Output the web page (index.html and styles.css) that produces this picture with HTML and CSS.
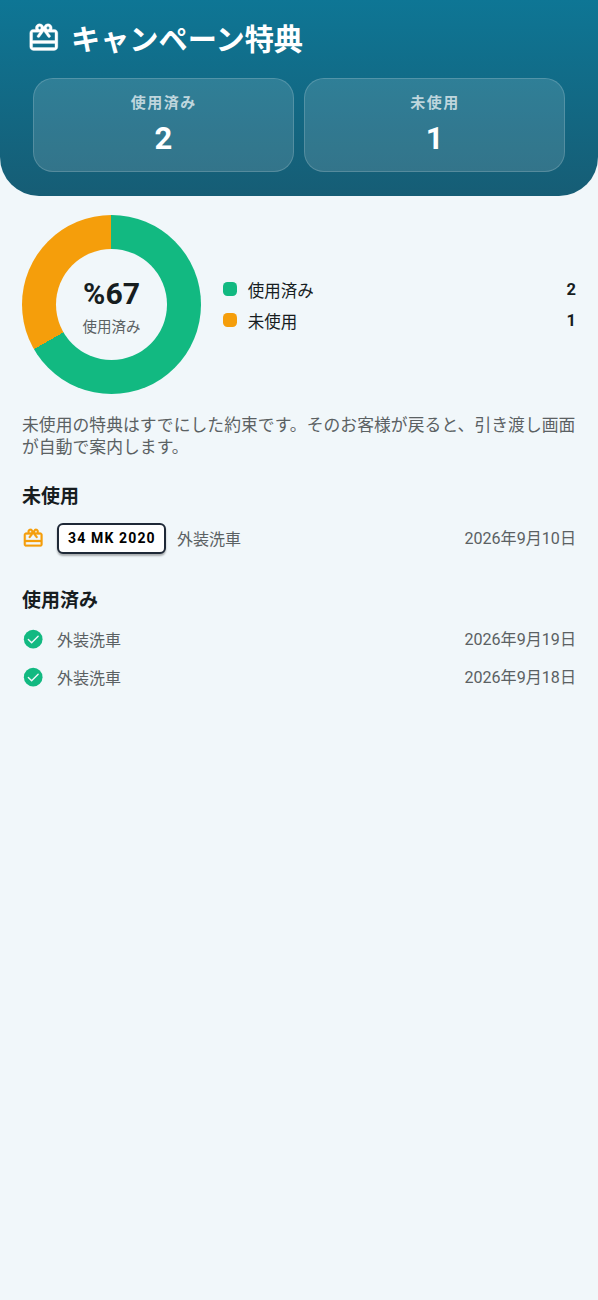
FILE: index.html
```html
<!DOCTYPE html>
<html lang="ja">
<head>
<meta charset="utf-8">
<title>キャンペーン特典</title>
<link rel="stylesheet" href="styles.css">
</head>
<body>
<svg class="defs" width="0" height="0" aria-hidden="true">
  <symbol id="gift" viewBox="0 0 24 24"><path d="M19.4 6h-1.58c.11-.31.18-.65.18-1 0-1.66-1.34-3-3-3-1.05 0-1.96.54-2.5 1.35l-.5.67-.5-.68C10.96 2.54 10.05 2 9 2 7.34 2 6 3.34 6 5c0 .35.07.69.18 1H4.6C3.1 6 2 7.1 2 8.6v9.8C2 19.9 3.1 21 4.6 21h14.8c1.5 0 2.6-1.1 2.6-2.6V8.6C22 7.1 20.9 6 19.4 6zM15 4c.55 0 1 .45 1 1s-.45 1-1 1-1-.45-1-1 .45-1 1-1zM9 4c.55 0 1 .45 1 1s-.45 1-1 1-1-.45-1-1 .45-1 1-1zm11 15H4v-3h16v3zm0-5H4V8h5.08L7.4 10.28c-.33.45-.23 1.07.22 1.4.44.32 1.07.22 1.39-.22L12 7.4l2.99 4.06c.32.44.95.54 1.39.22.45-.33.55-.95.22-1.4L14.92 8H20v6z"/></symbol>
  <symbol id="check" viewBox="0 0 24 24"><circle cx="12" cy="12" r="10"/><path d="M6.8 12.4l3.5 3.5 7-7" fill="none" stroke="#f1f7fa" stroke-width="1.5" stroke-linecap="round" stroke-linejoin="round"/></symbol>
</svg>
<header class="header">
  <h1 class="title"><svg class="title-icon"><use href="#gift"/></svg><span class="title-text">キャンペーン特典</span></h1>
  <div class="stats">
    <div class="stat"><span class="stat-label">使用済み</span><span class="stat-value">2</span></div>
    <div class="stat"><span class="stat-label">未使用</span><span class="stat-value">1</span></div>
  </div>
</header>
<main class="content">
  <section class="summary">
    <div class="donut">
      <div class="donut-hole"><span class="percent">%67</span><span class="percent-label">使用済み</span></div>
    </div>
    <div class="legend">
      <div class="legend-row"><i class="swatch used"></i><span class="legend-name">使用済み</span><b class="legend-value">2</b></div>
      <div class="legend-row"><i class="swatch unused"></i><span class="legend-name">未使用</span><b class="legend-value">1</b></div>
    </div>
  </section>
  <p class="note">未使用の特典はすでにした約束です。そのお客様が戻ると、引き渡し画面が自動で案内します。</p>
  <h2 class="heading">未使用</h2>
  <div class="row row-tall"><svg class="icon amber"><use href="#gift"/></svg><span class="plate">34 MK 2020</span><span class="service">外装洗車</span><time class="date">2026年9月10日</time></div>
  <h2 class="heading heading-used">使用済み</h2>
  <div class="row"><svg class="icon green"><use href="#check"/></svg><span class="service">外装洗車</span><time class="date">2026年9月19日</time></div>
  <div class="row"><svg class="icon green"><use href="#check"/></svg><span class="service">外装洗車</span><time class="date">2026年9月18日</time></div>
</main>
</body>
</html>
```
FILE: styles.css
```css
* { box-sizing: border-box; }
body {
  margin: 0;
  min-height: 1300px;
  background: #f1f7fa;
  color: #171d1f;
  font-family: Roboto, "Noto Sans CJK JP", sans-serif;
}
.defs { display: block; height: 0; }
.header {
  height: 196px;
  padding: 18px 33px 0;
  border-radius: 0 0 39px 39px;
  background: linear-gradient(#0e7695, #165d75);
  color: #fff;
}
.title {
  display: flex;
  align-items: flex-start;
  gap: 10.4px;
  height: 42px;
  margin: 0 0 18px -6px;
  font-size: 29.2px;
  line-height: 42px;
  font-weight: 700;
  white-space: nowrap;
}
.title-icon { width: 33.6px; height: 33.6px; margin-top: 3px; fill: currentColor; stroke: currentColor; stroke-width: .25px; }
.title-text { padding-top: 1px; }
.stats { display: grid; grid-template-columns: 1fr 1fr; gap: 10.5px; }
.stat {
  display: flex;
  flex-direction: column;
  align-items: center;
  height: 93.5px;
  padding-top: 13px;
  border: 1px solid rgba(255, 255, 255, .17);
  border-radius: 20px;
  background: rgba(255, 255, 255, .13);
}
.stat-label {
  padding-left: 1px;
  font-size: 15px;
  line-height: 22px;
  font-weight: 700;
  letter-spacing: 1.5px;
  color: rgba(255, 255, 255, .7);
}
.stat-value { margin-top: 6px; font-size: 31px; line-height: 38px; font-weight: 700; }
.content { padding: 18px 22px 0; }
.summary { display: flex; align-items: center; gap: 22px; height: 181px; }
.donut {
  display: grid;
  place-items: center;
  flex: none;
  width: 179.2px;
  height: 179.2px;
  border-radius: 50%;
  background: conic-gradient(#12b981 0 240deg, #f59e0b 240deg);
}
.donut-hole {
  display: flex;
  flex-direction: column;
  align-items: center;
  width: 111px;
  height: 111px;
  padding-top: 26px;
  border-radius: 50%;
  background: #f1f7fa;
}
.percent { font-size: 30.2px; line-height: 38px; font-weight: 700; }
.percent-label { margin-top: 5px; font-size: 14.5px; line-height: 20px; color: #5b6163; }
.legend { flex: 1; }
.legend-row { display: flex; align-items: center; height: 31.5px; font-size: 16.5px; }
.swatch { width: 14px; height: 14px; margin-right: 10.5px; border-radius: 4.5px; }
.used { background: #12b981; }
.unused { background: #f59e0b; }
.legend-name { padding-top: 2px; }
.legend-value { margin-left: auto; padding-top: 1px; font-weight: 700; }
.note { margin: 19px -1px 0 0; font-size: 16.77px; line-height: 22px; letter-spacing: .07px; color: #5b6163; }
.heading { margin: 25px 0 0; font-size: 19px; line-height: 28px; font-weight: 700; }
.row { display: flex; align-items: center; height: 38px; color: #5b6163; font-size: 16px; }
.row-tall { height: 46px; margin-top: 4px; }
.heading-used { margin-top: 26px; margin-bottom: 5px; }
.icon { flex: none; width: 22.4px; height: 22.4px; margin-right: 12.6px; }
.amber { fill: #f59e0b; stroke: #f59e0b; stroke-width: .35px; }
.green { fill: #12b981; }
.plate {
  width: 109px;
  height: 31px;
  margin-right: 11px;
  padding-left: 9px;
  border: 2px solid #1f2937;
  border-radius: 6px;
  background: #fff;
  box-shadow: 0 2px 2px rgba(0, 0, 0, .3);
  color: #000;
  font-size: 14px;
  line-height: 27px;
  font-weight: 700;
  letter-spacing: 1.15px;
  white-space: nowrap;
}
.date { margin-left: auto; padding-bottom: 2px; font-size: 16.1px; }
```
